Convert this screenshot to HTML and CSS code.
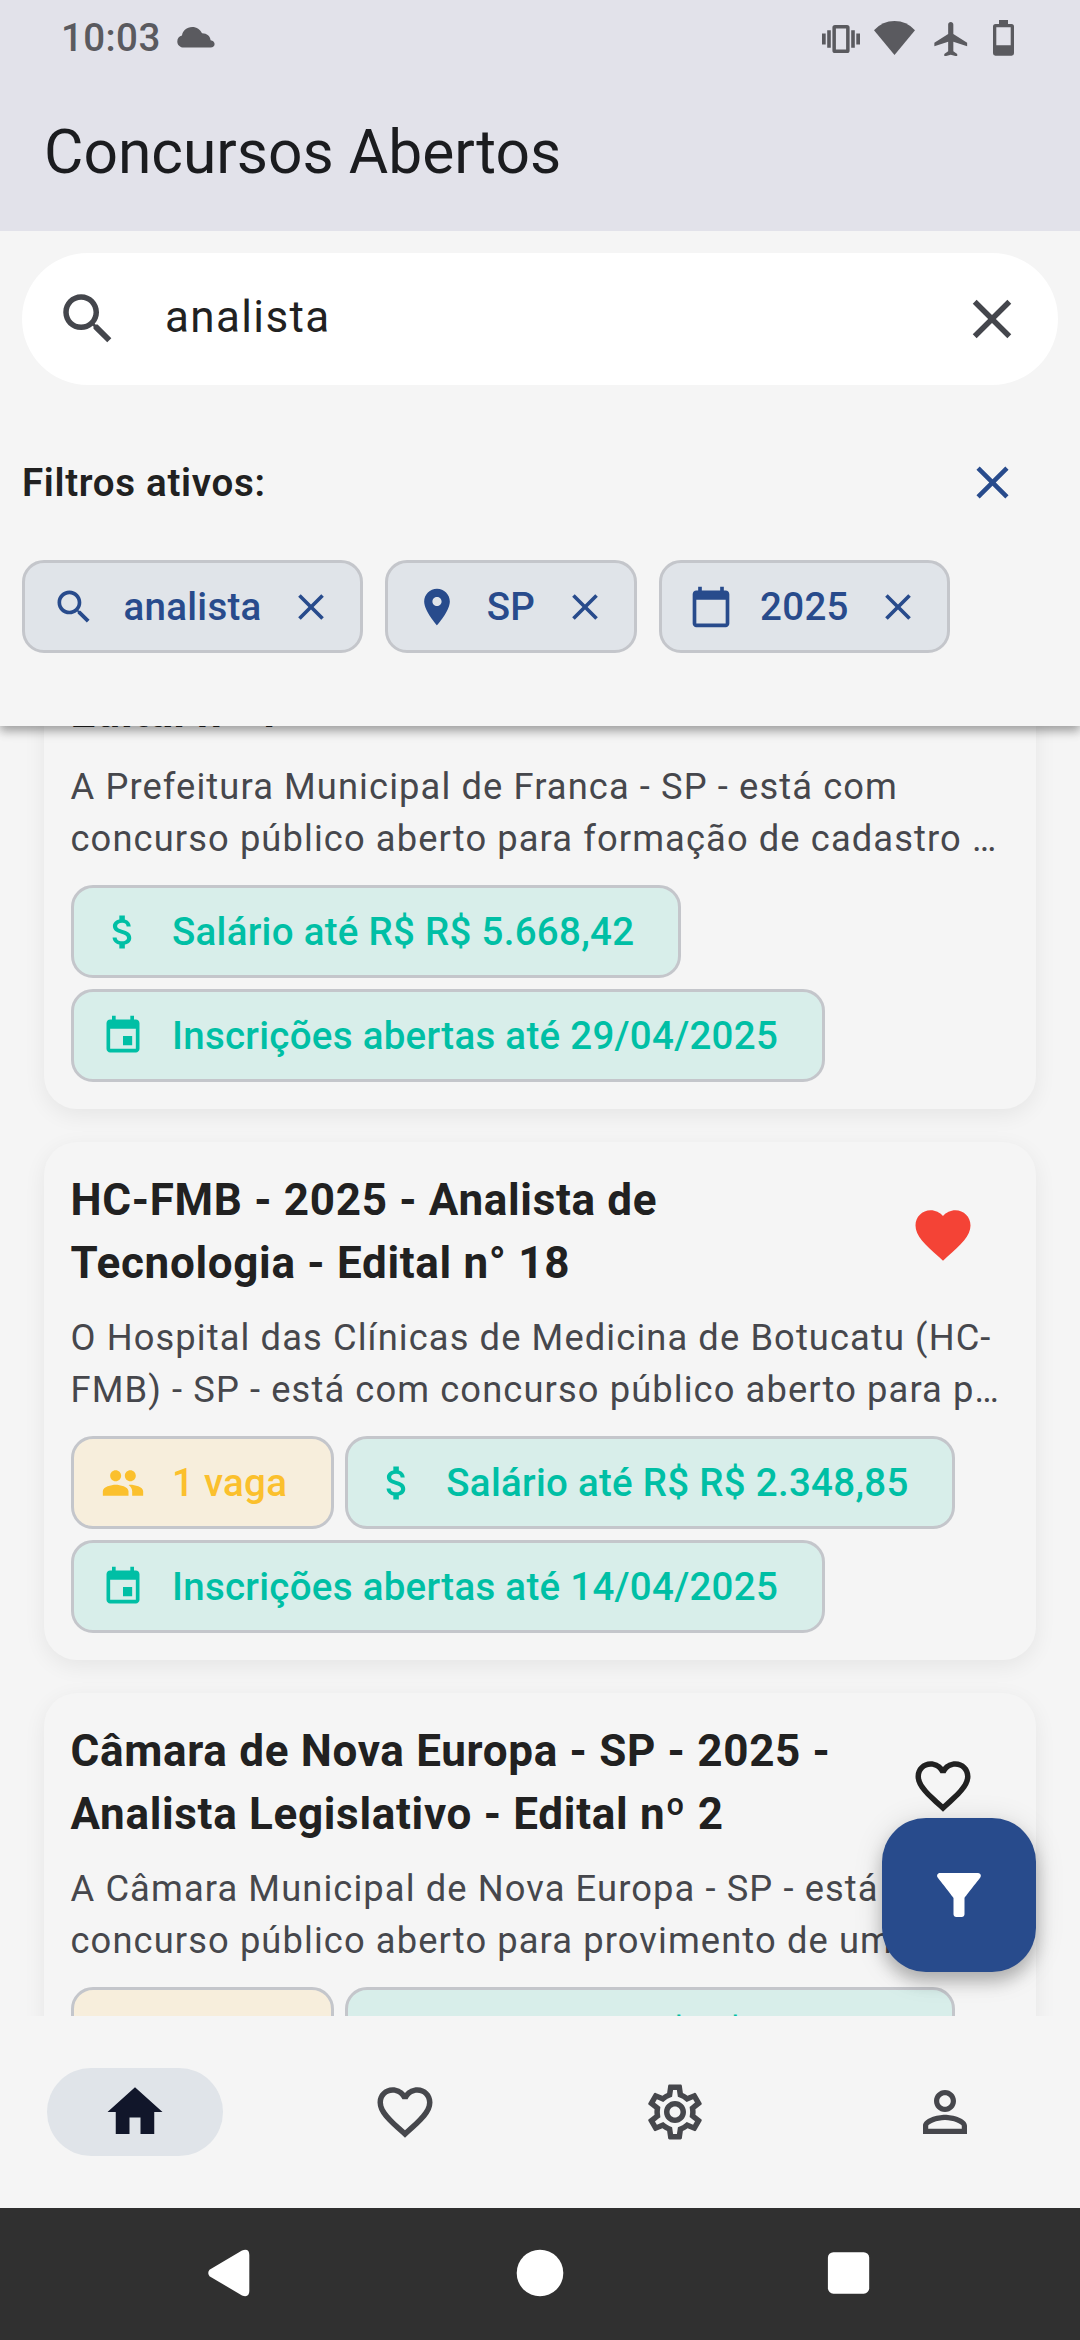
FILE: index.html
```
<!DOCTYPE html>
<html lang="pt-BR">
<head>
<meta charset="utf-8">
<title>Concursos Abertos</title>
<link rel="stylesheet" href="styles.css">
</head>
<body>
<svg class="sprite" aria-hidden="true">
  <symbol id="search" viewBox="0 0 24 24"><path d="M15.5 14h-.79l-.28-.27C15.41 12.59 16 11.11 16 9.5 16 5.91 13.09 3 9.5 3S3 5.91 3 9.5 5.91 16 9.5 16c1.61 0 3.09-.59 4.23-1.57l.27.28v.79l5 4.99L20.49 19l-4.99-5zm-6 0C7.01 14 5 11.99 5 9.5S7.01 5 9.5 5 14 7.01 14 9.5 11.99 14 9.5 14z"/></symbol>
  <symbol id="close" viewBox="0 0 24 24"><path d="M19 6.41L17.59 5 12 10.59 6.41 5 5 6.41 10.59 12 5 17.59 6.41 19 12 13.41 17.59 19 19 17.59 13.41 12z"/></symbol>
  <symbol id="place" viewBox="0 0 24 24"><path d="M12 2C8.13 2 5 5.13 5 9c0 5.25 7 13 7 13s7-7.75 7-13c0-3.87-3.13-7-7-7zm0 9.5c-1.38 0-2.5-1.12-2.5-2.5s1.12-2.5 2.5-2.5 2.5 1.12 2.5 2.5-1.12 2.5-2.5 2.5z"/></symbol>
  <symbol id="calendar" viewBox="0 0 24 24"><path d="M20 3h-1V1h-2v2H7V1H5v2H4c-1.1 0-2 .9-2 2v16c0 1.1.9 2 2 2h16c1.1 0 2-.9 2-2V5c0-1.1-.9-2-2-2zm0 18H4V8h16v13z"/></symbol>
  <symbol id="money" viewBox="0 0 24 24"><path d="M11.8 10.9c-2.27-.59-3-1.2-3-2.15 0-1.09 1.01-1.85 2.7-1.85 1.78 0 2.44.85 2.5 2.1h2.21c-.07-1.72-1.12-3.3-3.21-3.81V3h-3v2.16c-1.94.42-3.5 1.68-3.5 3.61 0 2.31 1.91 3.46 4.7 4.13 2.5.6 3 1.48 3 2.41 0 .69-.49 1.79-2.7 1.79-2.06 0-2.87-.92-2.98-2.1h-2.2c.12 2.19 1.76 3.42 3.68 3.83V21h3v-2.15c1.95-.37 3.5-1.5 3.5-3.55 0-2.84-2.43-3.81-4.7-4.4z"/></symbol>
  <symbol id="event" viewBox="0 0 24 24"><path d="M17 12h-5v5h5v-5zM16 1v2H8V1H6v2H5c-1.11 0-1.99.9-1.99 2L3 19c0 1.1.89 2 2 2h14c1.1 0 2-.9 2-2V5c0-1.1-.9-2-2-2h-1V1h-2zm3 18H5V8h14v11z"/></symbol>
  <symbol id="people" viewBox="0 0 24 24"><path d="M16 11c1.66 0 2.99-1.34 2.99-3S17.66 5 16 5c-1.66 0-3 1.34-3 3s1.34 3 3 3zm-8 0c1.66 0 2.99-1.34 2.99-3S9.66 5 8 5C6.34 5 5 6.34 5 8s1.34 3 3 3zm0 2c-2.33 0-7 1.17-7 3.5V19h14v-2.5c0-2.33-4.67-3.5-7-3.5zm8 0c-.29 0-.62.02-.97.05 1.16.84 1.97 1.97 1.97 3.45V19h6v-2.5c0-2.33-4.67-3.5-7-3.5z"/></symbol>
  <symbol id="heart" viewBox="0 0 24 24"><path d="M12 21.35l-1.45-1.32C5.4 15.36 2 12.28 2 8.5 2 5.42 4.42 3 7.5 3c1.74 0 3.41.81 4.5 2.09C13.09 3.81 14.76 3 16.5 3 19.58 3 22 5.42 22 8.5c0 3.78-3.4 6.86-8.55 11.54L12 21.35z"/></symbol>
  <symbol id="heart-line" viewBox="0 0 24 24"><path d="M16.5 3c-1.74 0-3.41.81-4.5 2.09C10.91 3.81 9.24 3 7.5 3 4.42 3 2 5.42 2 8.5c0 3.78 3.4 6.86 8.55 11.54L12 21.35l1.45-1.32C18.6 15.36 22 12.28 22 8.5 22 5.42 19.58 3 16.5 3zm-4.4 15.55l-.1.1-.1-.1C7.14 14.24 4 11.39 4 8.5 4 6.5 5.5 5 7.5 5c1.54 0 3.04.99 3.57 2.36h1.87C13.46 5.99 14.96 5 16.5 5c2 0 3.5 1.5 3.5 3.5 0 2.89-3.14 5.74-7.9 10.05z"/></symbol>
  <symbol id="filter" viewBox="0 0 24 24"><path d="M4.25 5.61C6.27 8.2 10 13 10 13v6c0 .55.45 1 1 1h2c.55 0 1-.45 1-1v-6s3.72-4.8 5.74-7.39A.998.998 0 0 0 18.95 4H5.04c-.83 0-1.3.95-.79 1.61z"/></symbol>
  <symbol id="home" viewBox="0 0 24 24"><path d="M10 20v-6h4v6h5v-8h3L12 3 2 12h3v8z"/></symbol>
  <symbol id="settings" viewBox="0 0 24 24"><path d="M19.43 12.98c.04-.32.07-.64.07-.98s-.03-.66-.07-.98l2.11-1.65c.19-.15.24-.42.12-.64l-2-3.46c-.09-.16-.26-.25-.44-.25-.06 0-.12.01-.17.03l-2.49 1c-.52-.4-1.08-.73-1.69-.98l-.38-2.65C14.46 2.18 14.25 2 14 2h-4c-.25 0-.46.18-.49.42l-.38 2.65c-.61.25-1.17.59-1.69.98l-2.49-1c-.06-.02-.12-.03-.18-.03-.17 0-.34.09-.43.25l-2 3.46c-.13.22-.07.49.12.64l2.11 1.65c-.04.32-.07.65-.07.98s.03.66.07.98l-2.11 1.65c-.19.15-.24.42-.12.64l2 3.46c.09.16.26.25.44.25.06 0 .12-.01.17-.03l2.49-1c.52.4 1.08.73 1.69.98l.38 2.65c.03.24.24.42.49.42h4c.25 0 .46-.18.49-.42l.38-2.65c.61-.25 1.17-.59 1.69-.98l2.49 1c.06.02.12.03.18.03.17 0 .34-.09.43-.25l2-3.46c.12-.22.07-.49-.12-.64l-2.11-1.65zm-1.98-1.71c.04.31.05.52.05.73 0 .21-.02.43-.05.73l-.14 1.13.89.7 1.08.84-.7 1.21-1.27-.51-1.04-.42-.9.68c-.43.32-.84.56-1.25.73l-1.06.43-.16 1.13-.2 1.35h-1.4l-.19-1.35-.16-1.13-1.06-.43c-.43-.18-.83-.41-1.23-.71l-.91-.7-1.06.43-1.27.51-.7-1.21 1.08-.84.89-.7-.14-1.13c-.03-.31-.05-.54-.05-.74s.02-.43.05-.73l.14-1.13-.89-.7-1.08-.84.7-1.21 1.27.51 1.04.42.9-.68c.43-.32.84-.56 1.25-.73l1.06-.43.16-1.13.2-1.35h1.39l.19 1.35.16 1.13 1.06.43c.43.18.83.41 1.23.71l.91.7 1.06-.43 1.27-.51.7 1.21-1.07.85-.89.7.14 1.13zM12 8c-2.21 0-4 1.79-4 4s1.79 4 4 4 4-1.79 4-4-1.79-4-4-4zm0 6c-1.1 0-2-.9-2-2s.9-2 2-2 2 .9 2 2-.9 2-2 2z"/></symbol>
  <symbol id="person" viewBox="0 0 24 24"><path d="M12 5.9c1.16 0 2.1.94 2.1 2.1s-.94 2.1-2.1 2.1S9.9 9.16 9.9 8s.94-2.1 2.1-2.1m0 9c2.97 0 6.1 1.46 6.1 2.1v1.1H5.9V17c0-.64 3.13-2.1 6.1-2.1M12 4C9.79 4 8 5.79 8 8s1.79 4 4 4 4-1.79 4-4-1.79-4-4-4zm0 9c-2.67 0-8 1.34-8 4v3h16v-3c0-2.66-5.33-4-8-4z"/></symbol>
</svg>

<div class="screen">
  <div class="statusbar">
    <div class="status-left">
      <span class="clock">10:03</span>
      <svg class="cloud" viewBox="0 0 38 21"><path d="M7 20.500C3 20.500 .3 17.800 .3 14.400C.3 11.500 2.200 9.200 5 8.600C5.500 3.800 9.800 0 15.200 0C19.700 0 23.400 2.500 25 6.300C29.900 6.200 33.300 9.200 33.600 13.200C36 13.500 37.600 15 37.600 17C37.600 19.100 36 20.500 33.600 20.500Z"/></svg>
    </div>
    <div class="status-right">
      <svg class="vibrate" viewBox="0 0 38 28"><path d="M0 8.500h3.700v11H0zM5.200 5.300h3.600v17.400H5.200zM29.200 5.300h3.600v17.400h-3.600zM34.300 8.500H38v11h-3.700z"/><path fill-rule="evenodd" d="M13 0h12a2.600 2.600 0 0 1 2.600 2.600v22.800A2.600 2.600 0 0 1 25 28H13a2.600 2.600 0 0 1-2.600-2.600V2.600A2.600 2.600 0 0 1 13 0zm.9 3.500v21h10.200v-21z"/></svg>
      <svg class="wifi" viewBox="0 0 41 34"><path d="M0 9.200Q8.500 0 20.500 0T41 9.200L20.500 34Z"/></svg>
      <svg class="plane" viewBox="2.500 2 19 20"><path d="M21.500 16v-2l-8-5V3.500c0-.83-.67-1.500-1.500-1.500s-1.500.67-1.500 1.500V9l-8 5v2l8-2.500V19l-2.250 1.500V22l3.750-1 3.750 1v-1.500L13.500 19v-5.500z"/></svg>
      <svg class="battery" viewBox="0 0 21 36"><path fill-rule="evenodd" d="M6 0h9v4h3.500A2.500 2.500 0 0 1 21 6.500v26.800a2.400 2.400 0 0 1-2.400 2.400H2.400A2.400 2.400 0 0 1 0 33.300V6.500A2.500 2.500 0 0 1 2.500 4H6zM3.300 7.300v18h14.400v-18z"/></svg>
    </div>
  </div>
  <header class="appbar"><h1 class="appbar-title">Concursos Abertos</h1></header>

  <section class="filters">
    <div class="searchbox">
      <svg class="icon"><use href="#search"/></svg>
      <span class="query">analista</span>
      <svg class="icon clear"><use href="#close"/></svg>
    </div>
    <div class="filters-head">
      <span class="filters-label">Filtros ativos:</span>
      <svg class="icon-md"><use href="#close"/></svg>
    </div>
    <div class="active-chips">
      <span class="chip filter-chip"><svg class="icon-sm"><use href="#search"/></svg>analista<svg class="icon-sm"><use href="#close"/></svg></span>
      <span class="chip filter-chip"><svg class="icon-sm"><use href="#place"/></svg>SP<svg class="icon-sm"><use href="#close"/></svg></span>
      <span class="chip filter-chip"><svg class="icon-sm"><use href="#calendar"/></svg>2025<svg class="icon-sm"><use href="#close"/></svg></span>
    </div>
  </section>

  <main class="viewport">
    <div class="list">
      <article class="card">
        <div class="card-head card-head-short">
          <h2 class="card-title">Edital nº 1</h2>
        </div>
        <p class="desc">A Prefeitura Municipal de Franca - SP - está com<br>concurso público aberto para formação de cadastro …</p>
        <div class="tags">
          <span class="chip teal"><svg class="icon-sm"><use href="#money"/></svg>Salário até R$ R$ 5.668,42</span>
          <span class="chip teal"><svg class="icon-sm"><use href="#event"/></svg>Inscrições abertas até 29/04/2025</span>
        </div>
      </article>
      <article class="card">
        <div class="card-head">
          <h2 class="card-title">HC-FMB - 2025 - Analista de<br>Tecnologia - Edital n° 18</h2>
          <span class="fav on"><svg class="icon"><use href="#heart"/></svg></span>
        </div>
        <p class="desc">O Hospital das Clínicas de Medicina de Botucatu (HC-<br>FMB) - SP - está com concurso público aberto para p…</p>
        <div class="tags">
          <span class="chip amber"><svg class="icon-sm"><use href="#people"/></svg>1 vaga</span>
          <span class="chip teal"><svg class="icon-sm"><use href="#money"/></svg>Salário até R$ R$ 2.348,85</span>
          <span class="chip teal"><svg class="icon-sm"><use href="#event"/></svg>Inscrições abertas até 14/04/2025</span>
        </div>
      </article>
      <article class="card">
        <div class="card-head">
          <h2 class="card-title">Câmara de Nova Europa - SP - 2025 -<br>Analista Legislativo - Edital nº 2</h2>
          <span class="fav"><svg class="icon"><use href="#heart-line"/></svg></span>
        </div>
        <p class="desc">A Câmara Municipal de Nova Europa - SP - está<br>concurso público aberto para provimento de um</p>
        <div class="tags">
          <span class="chip amber"><svg class="icon-sm"><use href="#people"/></svg>1 vaga</span>
          <span class="chip teal"><svg class="icon-sm"><use href="#money"/></svg>Salário até R$ R$ 2.348,85</span>
        </div>
      </article>
    </div>
    <div class="fab"><svg class="icon"><use href="#filter"/></svg></div>
  </main>

  <nav class="bottomnav">
    <span class="nav-item active"><svg class="icon"><use href="#home"/></svg></span>
    <span class="nav-item"><svg class="icon"><use href="#heart-line"/></svg></span>
    <span class="nav-item"><svg class="icon"><use href="#settings"/></svg></span>
    <span class="nav-item"><svg class="icon"><use href="#person"/></svg></span>
  </nav>
  <div class="sysbar">
    <svg class="sys" viewBox="0 0 48 48"><path d="M3.500 20.800Q1 24 3.500 27.200L36 46.500Q43.300 49 43.300 42V6Q43.300-1 36 1.500Z"/></svg>
    <svg class="sys" viewBox="0 0 48 48"><circle cx="24" cy="24" r="23.300"/></svg>
    <svg class="sys" viewBox="0 0 48 48"><rect x="1.900" y="3.200" width="41.300" height="41.500" rx="5.500"/></svg>
  </div>
</div>
</body>
</html>
```
FILE: styles.css
```
* { box-sizing: border-box; }
body { margin: 0; background: #f5f5f5; font-family: Roboto, sans-serif; color: #212121; }
svg { display: block; fill: currentColor; flex: none; }
h1, h2, p { margin: 0; font-weight: 400; white-space: nowrap; }
.sprite { display: none; }
.screen { width: 1080px; height: 2340px; display: flex; flex-direction: column; overflow: hidden; }

.icon { width: 66px; height: 66px; }
.icon-md { width: 55px; height: 55px; }
.icon-sm { width: 44px; height: 44px; }

.statusbar { height: 77px; background: #e2e2ea; color: #5a5a5f; display: flex; justify-content: space-between; padding: 0 66px 0 61px; }
.status-left { display: flex; gap: 16px; }
.clock { font-size: 38.5px; font-weight: 500; line-height: 45px; letter-spacing: .4px; padding-top: 15px; }
.cloud { width: 38px; height: 21px; margin-top: 27px; }
.status-right { display: flex; padding-top: 20px; }
.vibrate { width: 38px; height: 28px; margin: 5px 14px 0 0; }
.wifi { width: 41px; height: 34px; margin: 1px 19px 0 0; }
.plane { width: 33.500px; height: 34.500px; margin: 1.500px 25.500px 0 0; }
.battery { width: 21px; height: 36px; }

.appbar { position: relative; z-index: 2; height: 154px; background: #e2e2ea; display: flex; align-items: center; padding: 0 44px; }
.appbar-title { font-size: 60.500px; line-height: 77px; color: #1b1c1f; padding-bottom: 4px; }

.filters { position: relative; z-index: 1; height: 495px; background: #f5f5f5; padding: 22px 22px 0; box-shadow: 0 5px 9px rgba(0,0,0,.3), 0 2px 16px rgba(0,0,0,.1); }
.searchbox { height: 132px; border-radius: 66px; background: #fff; color: #44464c; display: flex; align-items: center; padding: 0 33px; }
.query { flex: 1; margin-left: 44px; font-size: 44px; letter-spacing: 1.375px; color: #212121; padding-bottom: 5px; }
.filters-head { height: 132px; margin-top: 31.500px; display: flex; align-items: center; justify-content: space-between; padding-right: 38px; color: #284b8c; }
.filters-label { font-size: 38.500px; font-weight: 600; letter-spacing: .6875px; color: #212121; }
.active-chips { display: flex; gap: 22px; margin-top: 11.500px; }

.chip { display: flex; align-items: center; gap: 27.500px; height: 93px; border: 3px solid #c4c6cb; border-radius: 22px; font-size: 38.500px; font-weight: 500; letter-spacing: .275px; padding: 0 43.500px 0 27px; white-space: nowrap; }
.filter-chip { background: #e0e4e9; color: #284b8c; padding-right: 27px; }
.teal { background: #d8eeea; color: #00bfa5; }
.amber { background: #f7eedc; color: #fbc02d; }

.viewport { position: relative; height: 1290px; overflow: hidden; }
.list { display: flex; flex-direction: column; gap: 33px; padding: 0 44px; margin-top: -135px; }
.card { height: 518px; background: #f5f5f5; border-radius: 33px; padding: 27px 27px 27px 26.500px; box-shadow: 0 6px 22px rgba(0,0,0,.065); }
.card-head { height: 132px; display: flex; justify-content: space-between; }
.card-head-short { padding-top: 63px; }
.card-title { font-size: 44px; font-weight: 700; line-height: 63px; letter-spacing: .6875px; }
.fav { width: 132px; height: 132px; display: grid; place-items: center; }
.on { color: #f44336; }
.desc { margin-top: 10.500px; font-size: 36.300px; line-height: 52px; letter-spacing: 1.1px; color: #46474c; }
.tags { display: flex; flex-wrap: wrap; gap: 11px; margin-top: 20.500px; }

.fab { position: absolute; right: 44px; bottom: 44px; width: 154px; height: 154px; border-radius: 44px; background: #284b8c; color: #fff; display: grid; place-items: center; box-shadow: 0 10px 16px rgba(0,0,0,.22), 0 4px 30px rgba(0,0,0,.13); }

.bottomnav { height: 192px; background: #f5f5f5; display: grid; grid-template-columns: repeat(4, 1fr); place-items: center; color: #46474c; }
.nav-item { width: 176px; height: 88px; border-radius: 44px; display: grid; place-items: center; }
.active { background: #e0e4e9; color: #11162a; }

.sysbar { flex: 1; background: #303030; color: #fff; display: flex; justify-content: center; gap: 262px; padding-top: 41px; }
.sys { width: 48px; height: 48px; overflow: visible; }
```
